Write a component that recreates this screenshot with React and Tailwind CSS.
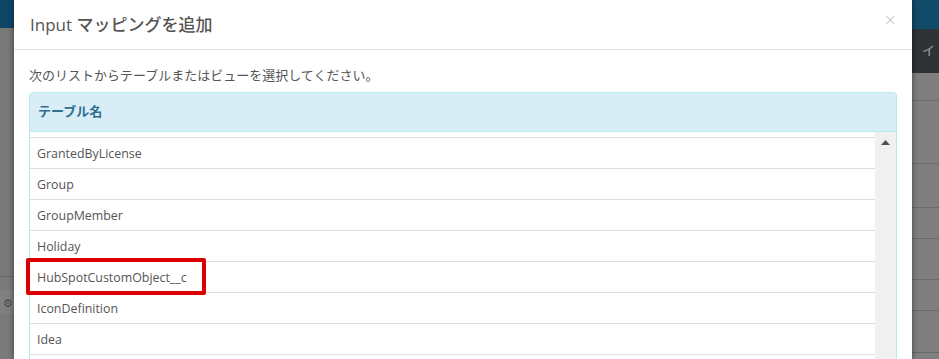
import React from "react";

const rows = [
  "GrantedByLicense",
  "Group",
  "GroupMember",
  "Holiday",
  "HubSpotCustomObject__c",
  "IconDefinition",
  "Idea",
];

const font = { fontFamily: '"Open Sans", "Noto Sans CJK JP", sans-serif' };

export default function App() {
  return (
    <div
      className="relative flex h-[359px] w-[939px] overflow-hidden bg-[#777777]"
      style={font}
    >
      {/* left background strip */}
      <div className="flex w-[14px] shrink-0 flex-col">
        <div className="h-[28px] bg-[#0e4666]" />
        <div className="h-[248px] bg-[#787878]" />
        <div className="h-px bg-[#666666]" />
        <div className="flex flex-1 flex-col bg-[#7a7a7a] pt-[13px]">
          <div className="flex h-[24px] w-[14px] items-center justify-end bg-[#808080] pr-[1px] text-[11px] leading-none text-[#4a4a4a]">
            ⚙
          </div>
        </div>
      </div>

      {/* modal */}
      <div className="relative z-10 flex w-[898px] shrink-0 flex-col bg-white shadow-[0_0_6px_rgba(0,0,0,0.5)]">
        <div className="flex h-[50px] shrink-0 items-center justify-between border-b border-[#e5e5e5] pl-[16px] pr-[16px]">
          <div className="text-[17px] font-medium leading-none text-[#555555]">
            Input マッピングを追加
          </div>
          <div className="pb-[10px] text-[20px] font-light leading-none text-[#c4c4c4]">
            ×
          </div>
        </div>
        <div className="flex flex-1 flex-col px-[15px] pt-[15px]">
          <div className="h-[20px] text-[13px] leading-[20px] text-[#555555]">
            次のリストからテーブルまたはビューを選択してください。
          </div>
          <div className="mt-[7px] flex flex-1 flex-col rounded-t-[4px] border border-b-0 border-[#bce8f1]">
            <div className="flex h-[39px] shrink-0 items-center border-b border-[#bce8f1] bg-[#d9edf7] pl-[8px] text-[13px] font-bold text-[#31708f]">
              テーブル名
            </div>
            <div className="flex flex-1">
              <div className="flex flex-1 flex-col pt-[5px]">
                <div className="border-t border-[#dddddd]" />
                {rows.map((r) => (
                  <div
                    key={r}
                    className="flex h-[31px] shrink-0 items-center border-b border-[#dddddd] pl-[7px] pt-[2px] text-[12.4px] text-[#555555]"
                  >
                    {r}
                  </div>
                ))}
                <div className="h-[31px] shrink-0" />
              </div>
              <div className="flex w-[21px] shrink-0 justify-center bg-[#f0f0f0] pt-[8px]">
                <svg width="9" height="5" viewBox="0 0 9 5">
                  <polygon points="4.5,0 9,5 0,5" fill="#505050" />
                </svg>
              </div>
            </div>
          </div>
        </div>
        {/* annotation highlight */}
        <div className="absolute left-[12px] top-[258px] h-[37px] w-[180px] rounded-[2px] border-[4px] border-[#dd0000]" />
      </div>

      {/* right background strip */}
      <div className="flex flex-1 flex-col">
        <div className="h-[29px] bg-[#124a6a]" />
        <div className="flex h-[44px] items-center bg-[#2e3336] pl-[10px] text-[13px] text-[#9aa0a4]">
          イ
        </div>
        <div className="h-[27px] bg-[#7f7f7f]" />
        <div className="h-px bg-[#6a6a6a]" />
        <div className="h-[62px] bg-[#7f7f7f]" />
        <div className="h-px bg-[#6a6a6a]" />
        <div className="h-[43px] bg-[#7f7f7f]" />
        <div className="h-px bg-[#6a6a6a]" />
        <div className="h-[30px] bg-[#7f7f7f]" />
        <div className="h-px bg-[#6a6a6a]" />
        <div className="h-[40px] bg-[#7f7f7f]" />
        <div className="h-px bg-[#6a6a6a]" />
        <div className="h-[30px] bg-[#7f7f7f]" />
        <div className="h-px bg-[#6a6a6a]" />
        <div className="h-[41px] bg-[#7f7f7f]" />
        <div className="h-px bg-[#6a6a6a]" />
        <div className="flex-1 bg-[#7f7f7f]" />
      </div>
    </div>
  );
}
